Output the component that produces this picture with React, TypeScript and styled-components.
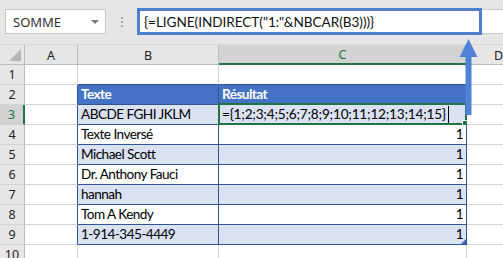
import styled, { createGlobalStyle } from "styled-components";

const GlobalStyle = createGlobalStyle`
  html, body {
    margin: 0;
    padding: 0;
    background: #ffffff;
    overflow: hidden;
  }
  * {
    box-sizing: border-box;
  }
`;

const GRID = "#d4d4d4";
const HEAD_BG = "#e6e6e6";
const SEL_BG = "#d2d2d2";
const GREEN = "#217346";
const TABLE_BLUE = "#4472c4";
const TABLE_LINE = "#2f5597";
const BAND = "#d9e1f2";

const Page = styled.div`
  position: relative;
  width: 503px;
  height: 258px;
  overflow: hidden;
  font-family: Lato, "Liberation Sans", sans-serif;
`;

const Toolbar = styled.div`
  display: flex;
  align-items: center;
  height: 45px;
  padding: 0 0 1px 5px;
  background: ${HEAD_BG};
  border-bottom: 1px solid #d9d9d9;
`;

const NameBox = styled.div`
  display: flex;
  align-items: center;
  justify-content: space-between;
  width: 101px;
  height: 25px;
  padding: 0 6px 0 7px;
  background: #ffffff;
  border: 1px solid #c6c6c6;
  font-family: "Noto Sans", "Open Sans", sans-serif;
  font-size: 13px;
  color: #333333;
`;

const Caret = styled.span`
  width: 0;
  height: 0;
  border-left: 4px solid transparent;
  border-right: 4px solid transparent;
  border-top: 4px solid #7a7a7a;
`;

const Grip = styled.div`
  display: flex;
  flex-direction: column;
  gap: 2px;
  margin: 0 14px 0 15px;
`;

const GripDot = styled.span`
  width: 2px;
  height: 2px;
  background: #a6a6a6;
`;

const FormulaField = styled.div`
  flex: 1;
  display: flex;
  align-items: center;
  height: 25px;
  background: #ffffff;
  border-top: 1px solid #c6c6c6;
  border-bottom: 1px solid #c6c6c6;
`;

const FormulaHighlight = styled.div`
  display: flex;
  align-items: center;
  width: 345px;
  height: 27px;
  padding-left: 4px;
  border: 3px solid #4f7fcf;
  font-size: 13.6px;
  letter-spacing: -0.05px;
  color: #111111;
  white-space: nowrap;
`;

const Sheet = styled.div`
  display: grid;
  grid-template-columns: 25px 53px 141px 248px 64px;
  grid-auto-rows: 20px;
`;

const Corner = styled.div`
  position: relative;
  background: ${HEAD_BG};
  border-right: 1px solid #bdbdbd;
  border-bottom: 1px solid #bdbdbd;

  &::after {
    content: "";
    position: absolute;
    right: 3px;
    bottom: 3px;
    width: 0;
    height: 0;
    border-left: 12px solid transparent;
    border-bottom: 12px solid #b5b5b5;
  }
`;

const ColHead = styled.div<{ $selected?: boolean }>`
  display: flex;
  align-items: center;
  justify-content: center;
  padding-top: 1px;
  background: ${(p) => (p.$selected ? SEL_BG : HEAD_BG)};
  border-right: 1px solid #bdbdbd;
  border-bottom: ${(p) => (p.$selected ? `2px solid ${GREEN}` : "1px solid #bdbdbd")};
  font-family: "Noto Sans", "Open Sans", sans-serif;
  font-size: 12.5px;
  color: ${(p) => (p.$selected ? GREEN : "#222222")};
`;

const RowHead = styled.div<{ $selected?: boolean }>`
  display: flex;
  align-items: center;
  justify-content: center;
  background: ${(p) => (p.$selected ? SEL_BG : HEAD_BG)};
  border-right: ${(p) => (p.$selected ? `2px solid ${GREEN}` : "1px solid #bdbdbd")};
  border-bottom: 1px solid ${GRID};
  font-family: "Noto Sans", "Open Sans", sans-serif;
  font-size: 12.5px;
  color: ${(p) => (p.$selected ? GREEN : "#222222")};
`;

type Kind = "plain" | "head" | "band" | "white";

const Cell = styled.div<{ $kind?: Kind; $right?: boolean; $tableEdge?: boolean; $tableTop?: boolean }>`
  position: relative;
  display: flex;
  align-items: flex-end;
  justify-content: ${(p) => (p.$right ? "flex-end" : "flex-start")};
  padding: 0 3px 1px 3px;
  font-size: 13.6px;
  letter-spacing: -0.55px;
  line-height: 18px;
  white-space: nowrap;
  color: ${(p) => (p.$kind === "head" ? "#ffffff" : "#000000")};
  font-weight: ${(p) => (p.$kind === "head" ? 700 : 400)};
  background: ${(p) =>
    p.$kind === "head" ? TABLE_BLUE : p.$kind === "band" ? BAND : "#ffffff"};
  border-right: 1px solid
    ${(p) => (p.$kind && p.$kind !== "plain") || p.$tableEdge ? TABLE_LINE : GRID};
  border-bottom: 1px solid
    ${(p) => (p.$kind && p.$kind !== "plain") || p.$tableTop ? TABLE_LINE : GRID};
`;

const ArrayText = styled.span`
  letter-spacing: -0.2px;
`;

const EditOutline = styled.div`
  position: absolute;
  left: -1px;
  top: -2px;
  right: -1px;
  bottom: -1px;
  border: 2px solid ${GREEN};
  pointer-events: none;

  &::after {
    content: "";
    position: absolute;
    right: -4px;
    bottom: -4px;
    width: 5px;
    height: 5px;
    background: ${GREEN};
    border: 1px solid #ffffff;
  }
`;

const TextCursor = styled.span`
  display: inline-block;
  width: 1px;
  height: 17px;
  margin-left: 2px;
  background: #000000;
`;

const ResizeHandle = styled.span`
  position: absolute;
  right: 0;
  bottom: 0;
  width: 0;
  height: 0;
  border-left: 5px solid transparent;
  border-bottom: 5px solid #3a64b8;
`;

const Arrow = styled.svg`
  position: absolute;
  left: 459px;
  top: 37px;
`;

const names = [
  "Texte Inversé",
  "Michael Scott",
  "Dr. Anthony Fauci",
  "hannah",
  "Tom A Kendy",
  "1-914-345-4449",
];

export default function App() {
  return (
    <Page>
      <GlobalStyle />
      <Toolbar>
        <NameBox>
          SOMME
          <Caret />
        </NameBox>
        <Grip>
          <GripDot />
          <GripDot />
          <GripDot />
        </Grip>
        <FormulaField>
          <FormulaHighlight>{'{=LIGNE(INDIRECT("1:"&NBCAR(B3)))}'}</FormulaHighlight>
        </FormulaField>
      </Toolbar>

      <Sheet>
        <Corner />
        <ColHead>A</ColHead>
        <ColHead>B</ColHead>
        <ColHead $selected>C</ColHead>
        <ColHead>D</ColHead>

        <RowHead>1</RowHead>
        <Cell />
        <Cell $tableTop />
        <Cell $tableTop />
        <Cell />

        <RowHead>2</RowHead>
        <Cell $tableEdge />
        <Cell $kind="head">Texte</Cell>
        <Cell $kind="head">Résultat</Cell>
        <Cell />

        <RowHead $selected>3</RowHead>
        <Cell $tableEdge />
        <Cell $kind="band">ABCDE FGHI JKLM</Cell>
        <Cell $kind="band">
          <ArrayText>={"{"}1;2;3;4;5;6;7;8;9;10;11;12;13;14;15{"}"}</ArrayText>
          <TextCursor />
          <EditOutline />
        </Cell>
        <Cell />

        {names.map((name, i) => {
          const kind: Kind = i % 2 === 0 ? "white" : "band";
          const last = i === names.length - 1;
          return [
            <RowHead key={`h${i}`}>{i + 4}</RowHead>,
            <Cell key={`a${i}`} $tableEdge />,
            <Cell key={`b${i}`} $kind={kind}>
              {name}
            </Cell>,
            <Cell key={`c${i}`} $kind={kind} $right>
              1{last && <ResizeHandle />}
            </Cell>,
            <Cell key={`d${i}`} />,
          ];
        })}

        <RowHead>10</RowHead>
        <Cell />
        <Cell />
        <Cell />
        <Cell />
      </Sheet>

      <Arrow width="20" height="80" viewBox="0 0 20 80">
        <polygon points="9.5,2 0.5,20 18.5,20" fill="#5083d6" />
        <rect x="6.5" y="19" width="6" height="59" fill="#5083d6" />
      </Arrow>
    </Page>
  );
}
